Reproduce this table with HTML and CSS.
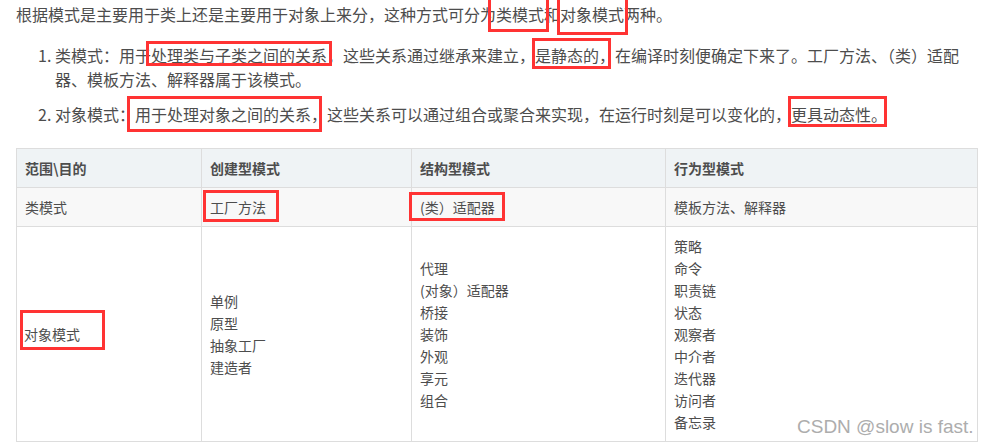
FILE: index.html
```html
<!DOCTYPE html>
<html lang="zh-CN">
<head>
    <meta charset="UTF-8">
    <meta name="viewport" content="width=device-width, initial-scale=1.0">
    <title>设计模式分类</title>
    <link rel="stylesheet" href="styles.css">
</head>
<body>
    <div class="article">
        <p class="intro">根据模式是主要用于类上还是主要用于对象上来分，这种方式可分为类模式和对象模式两种。</p>
        <ol class="kinds">
            <li>类模式：用于处理类与子类之间的关系，这些关系通过继承来建立，是静态的，在编译时刻便确定下来了。工厂方法、（类）适配器、模板方法、解释器属于该模式。</li>
            <li>对象模式：用于处理对象之间的关系，这些关系可以通过组合或聚合来实现，在运行时刻是可以变化的，更具动态性。</li>
        </ol>
        <table class="patterns">
            <colgroup>
                <col class="c1">
                <col class="c2">
                <col class="c3">
                <col class="c4">
            </colgroup>
            <thead>
                <tr>
                    <th>范围\目的</th>
                    <th>创建型模式</th>
                    <th>结构型模式</th>
                    <th>行为型模式</th>
                </tr>
            </thead>
            <tbody>
                <tr class="alt">
                    <td>类模式</td>
                    <td>工厂方法</td>
                    <td>(类）适配器</td>
                    <td>模板方法、解释器</td>
                </tr>
                <tr>
                    <td class="first">对象模式</td>
                    <td>单例<br>原型<br>抽象工厂<br>建造者</td>
                    <td>代理<br>(对象）适配器<br>桥接<br>装饰<br>外观<br>享元<br>组合</td>
                    <td>策略<br>命令<br>职责链<br>状态<br>观察者<br>中介者<br>迭代器<br>访问者<br>备忘录</td>
                </tr>
            </tbody>
        </table>
    </div>

    <!-- red boxes drawn over the screenshot -->
    <div class="mark m1"></div>
    <div class="mark m2"></div>
    <div class="mark m3"></div>
    <div class="mark m4"></div>
    <div class="mark m5"></div>
    <div class="mark m6"></div>
    <div class="mark m7"></div>
    <div class="mark m8"></div>
    <div class="mark m9"></div>

    <div class="watermark">CSDN @slow is fast.</div>
</body>
</html>
```

FILE: styles.css
```css
body {
    margin: 0;
    font-family: "Noto Sans CJK SC", "Liberation Sans", sans-serif;
    color: #4d4d4d;
    background: #fff;
    position: relative;
    height: 445px;
    overflow: hidden;
}

.article {
    padding: 1px 10px 0 16px;
}

.intro {
    margin: 0;
    font-size: 16px;
    line-height: 26px;
}

.kinds {
    margin: 16px 0 0;
    padding-left: 39px;
    font-size: 16px;
    line-height: 24px;
}

.kinds li {
    margin-bottom: 11px;
}

.kinds li:last-child {
    margin-bottom: 0;
}

.patterns {
    margin-top: 22px;
    width: 961px;
    border-collapse: collapse;
    table-layout: fixed;
    font-size: 14px;
    line-height: 22px;
}

.c1 { width: 185px; }
.c2 { width: 210px; }
.c3 { width: 254px; }
.c4 { width: 312px; }

th, td {
    border: 1px solid #ddd;
    padding: 8px;
    text-align: left;
    vertical-align: middle;
}

th {
    background-color: #eff3f5;
    font-weight: bold;
}

tr.alt td {
    background-color: #f8f8f8;
}

td.first {
    padding-left: 7px;
}

.mark {
    position: absolute;
    box-sizing: border-box;
    border: 3px solid #f33;
}

.m1 { left: 488px; top: -3px; width: 61px; height: 35px; }
.m2 { left: 557px; top: -3px; width: 71px; height: 38px; }
.m3 { left: 146px; top: 41px; width: 186px; height: 25px; }
.m4 { left: 532px; top: 38px; width: 79px; height: 31px; }
.m5 { left: 127px; top: 96px; width: 195px; height: 36px; }
.m6 { left: 788px; top: 96px; width: 99px; height: 31px; }
.m7 { left: 203px; top: 190px; width: 76px; height: 32px; }
.m8 { left: 409px; top: 192px; width: 96px; height: 29px; }
.m9 { left: 20px; top: 310px; width: 85px; height: 40px; }

.watermark {
    position: absolute;
    left: 797px;
    top: 416px;
    font-family: "Liberation Sans", Arial, sans-serif;
    font-size: 19px;
    line-height: 22px;
    color: #adadad;
    white-space: nowrap;
}
```
